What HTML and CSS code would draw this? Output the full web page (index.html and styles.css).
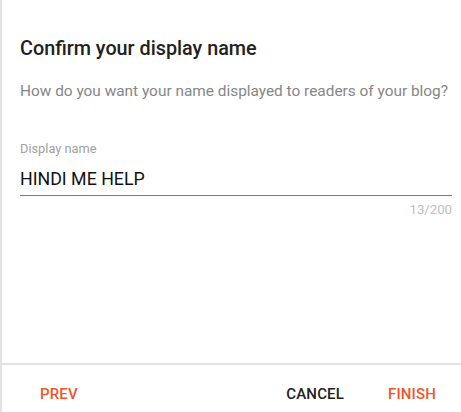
FILE: index.html
```html
<!DOCTYPE html>
<html>
<head>
<meta charset="utf-8">
<link rel="stylesheet" href="styles.css">
</head>
<body>
<div class="dialog">
  <div class="content">
    <h1 class="title">Confirm your display name</h1>
    <p class="subtitle">How do you want your name displayed to readers of your blog?</p>
    <div class="field">
      <label class="label">Display name</label>
      <div class="input">HINDI ME HELP</div>
      <div class="counter">13/200</div>
    </div>
  </div>
  <div class="footer">
    <button class="btn accent">PREV</button>
    <div class="spacer"></div>
    <button class="btn dark">CANCEL</button>
    <button class="btn accent">FINISH</button>
  </div>
</div>
</body>
</html>
```

FILE: styles.css
```css
html, body {
  margin: 0;
  padding: 0;
  background: #fff;
}
body {
  font-family: Roboto, "Liberation Sans", sans-serif;
}
.dialog {
  height: 412px;
  box-sizing: border-box;
  border-left: 2px solid #e3e3e3;
  display: flex;
  flex-direction: column;
}
.content {
  flex: 1;
  padding: 36px 9px 0 18px;
}
.title {
  margin: 0;
  font-size: 19.8px;
  line-height: 26px;
  font-weight: 500;
  color: #212121;
}
.subtitle {
  margin: 19px 0 0;
  font-size: 15.4px;
  line-height: 20px;
  color: #868686;
}
.field {
  margin-top: 40px;
}
.label {
  display: block;
  font-size: 12.8px;
  line-height: 16px;
  color: #a0a0a0;
}
.input {
  margin-top: 10px;
  font-size: 17.8px;
  line-height: 24px;
  height: 24px;
  color: #111;
  padding-bottom: 4px;
  border-bottom: 1px solid #e8542a;
}
.counter {
  margin-top: 6px;
  font-size: 13.2px;
  line-height: 16px;
  color: #bdbdbd;
  text-align: right;
}
.footer {
  border-top: 2px solid #e3e3e3;
  height: 49px;
  box-sizing: border-box;
  display: flex;
  align-items: flex-start;
  padding: 19px 9px 0 22px;
}
.spacer {
  flex: 1;
}
.btn {
  background: none;
  border: 0;
  padding: 0 16px;
  margin: 0;
  font-family: Roboto, "Liberation Sans", sans-serif;
  font-size: 15px;
  line-height: 20px;
  font-weight: 500;
  letter-spacing: 0.15px;
}
.btn + .btn {
  margin-left: 12px;
}
.accent {
  color: #f0552a;
}
.dark {
  color: #212121;
}
```
